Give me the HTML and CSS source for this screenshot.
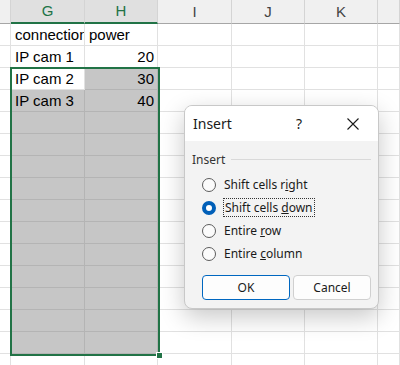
FILE: index.html
```html
<!DOCTYPE html>
<html lang="en">
<head>
  <meta charset="UTF-8" />
  <title>Insert cells</title>
  <link rel="stylesheet" href="styles.css">
</head>
<body>

  <div class="sheet">
    <!-- column headers -->
    <div class="grid">
      <div class="hd"></div>
      <div class="hd sel">G</div>
      <div class="hd sel">H</div>
      <div class="hd">I</div>
      <div class="hd">J</div>
      <div class="hd">K</div>
      <div class="hd"></div>

      <div class="c"></div><div class="c clip">connection</div><div class="c">power</div><div class="c"></div><div class="c"></div><div class="c"></div><div class="c"></div>
      <div class="c"></div><div class="c">IP cam 1</div><div class="c num">20</div><div class="c"></div><div class="c"></div><div class="c"></div><div class="c"></div>
      <div class="c"></div><div class="c">IP cam 2</div><div class="c num g">30</div><div class="c"></div><div class="c"></div><div class="c"></div><div class="c"></div>
      <div class="c"></div><div class="c g">IP cam 3</div><div class="c num g">40</div><div class="c"></div><div class="c"></div><div class="c"></div><div class="c"></div>
    </div>
    <div class="grid" id="rest"></div>

    <!-- selection frame -->
    <div class="selection"><span class="handle"></span></div>

    <!-- Insert dialog -->
    <div class="dialog">
      <div class="dlg-title">
        <span class="dlg-name">Insert</span>
        <span class="dlg-help">?</span>
        <svg class="dlg-close" width="14" height="14" viewBox="0 0 14 14">
          <path d="M1.5 1.5 L12.5 12.5 M12.5 1.5 L1.5 12.5" stroke="#1a1a1a" stroke-width="1.1" fill="none"/>
        </svg>
      </div>
      <div class="dlg-body">
        <div class="group"><span>Insert</span><i></i></div>
        <label class="opt"><span class="radio"></span><span>Shift cells r<u>i</u>ght</span></label>
        <label class="opt on"><span class="radio"></span><span class="focus">Shift cells <u>d</u>own</span></label>
        <label class="opt"><span class="radio"></span><span>Entire <u>r</u>ow</span></label>
        <label class="opt"><span class="radio"></span><span>Entire <u>c</u>olumn</span></label>
        <div class="buttons">
          <button class="btn primary">OK</button>
          <button class="btn">Cancel</button>
        </div>
      </div>
    </div>
  </div>

  <script>
    // rows 5..16: G/H selected (gray) through row 15
    var rest = document.getElementById("rest");
    for (var r = 5; r <= 16; r++) {
      for (var c = 0; c < 7; c++) {
        var d = document.createElement("div");
        d.className = "c";
        if ((c === 1 || c === 2) && r <= 15) d.className += " g";
        rest.appendChild(d);
      }
    }
  </script>
</body>
</html>
```

FILE: styles.css
```css
* {
  box-sizing: border-box;
  margin: 0;
  padding: 0;
}
body {
  background: #fff;
  font-family: "Liberation Sans", Arial, sans-serif;
  color: #000;
  overflow: hidden;
}
.sheet {
  position: relative;
  width: 400px;
  height: 365px;
  overflow: hidden;
}
.grid {
  display: grid;
  grid-template-columns: 11px 74px 73px 74px 73px 73px 22px;
  grid-auto-rows: 22px;
}
.grid:first-child {
  grid-template-rows: 24px;
}
.hd {
  background: #f0f0f0;
  border-right: 1px solid #d4d4d4;
  border-bottom: 1px solid #a6a6a6;
  color: #444;
  font-size: 15px;
  text-align: center;
  line-height: 23px;
}
.hd.sel {
  background: #e0e0e0;
  color: #217346;
  border-bottom: 2px solid #217346;
  line-height: 22px;
}
.c {
  border-right: 1px solid #e1e1e1;
  border-bottom: 1px solid #e1e1e1;
  font-size: 15px;
  line-height: 21px;
  padding: 0 3px 0 4px;
  white-space: nowrap;
  overflow: hidden;
}
.c.clip {
  padding-right: 0;
}
.c.num {
  text-align: right;
}
.c.g {
  background: #c6c6c6;
  border-color: #b4b4b4;
}

/* selection */
.selection {
  position: absolute;
  left: 10px;
  top: 67px;
  width: 150px;
  height: 289px;
  border: 2px solid #217346;
}
.handle {
  position: absolute;
  right: -5px;
  bottom: -5px;
  width: 7px;
  height: 7px;
  background: #217346;
  border: 1px solid #fff;
}

/* dialog */
.dialog {
  position: absolute;
  left: 184px;
  top: 105px;
  width: 195px;
  height: 204px;
  background: #f3f3f3;
  border: 1px solid #c8c8c8;
  border-radius: 8px;
  overflow: hidden;
  box-shadow: 0 8px 24px rgba(0,0,0,0.22);
  font-family: "Noto Sans", "Liberation Sans", sans-serif;
  font-size: 12px;
  color: #1a1a1a;
}
.dlg-title {
  display: flex;
  align-items: center;
  height: 35px;
  background: #fff;
  padding-left: 8px;
}
.dlg-name {
  font-size: 14px;
  flex: 1;
}
.dlg-help {
  font-size: 14px;
  width: 20px;
  margin-right: 30px;
}
.dlg-close {
  margin-right: 18px;
}
.dlg-body {
  padding: 10px 7px 0 7px;
}
.group {
  display: flex;
  align-items: center;
  gap: 6px;
  height: 16px;
  color: #333;
}
.group i {
  flex: 1;
  border-top: 1px solid #d9d9d9;
}
.opt {
  display: flex;
  align-items: center;
  height: 23px;
  padding-left: 10px;
  gap: 8px;
}
.opt:first-of-type {
  margin-top: 6px;
}
.radio {
  width: 14px;
  height: 14px;
  border-radius: 50%;
  border: 1px solid #5c5c5c;
  background: #fbfbfb;
}
.opt.on .radio {
  border: 4px solid #005fb8;
  background: #fff;
}
.focus {
  outline: 1px dotted #333;
  outline-offset: 0;
  padding: 0 1px;
}
.buttons {
  display: flex;
  gap: 3px;
  margin-top: 10px;
  padding-left: 10px;
}
.btn {
  height: 25px;
  font-family: inherit;
  font-size: 12px;
  color: #1a1a1a;
  background: #fdfdfd;
  border: 1px solid #d0d0d0;
  border-radius: 4px;
}
.btn.primary {
  width: 88px;
  border-color: #0067c0;
}
.btn:last-child {
  width: 78px;
}
```
